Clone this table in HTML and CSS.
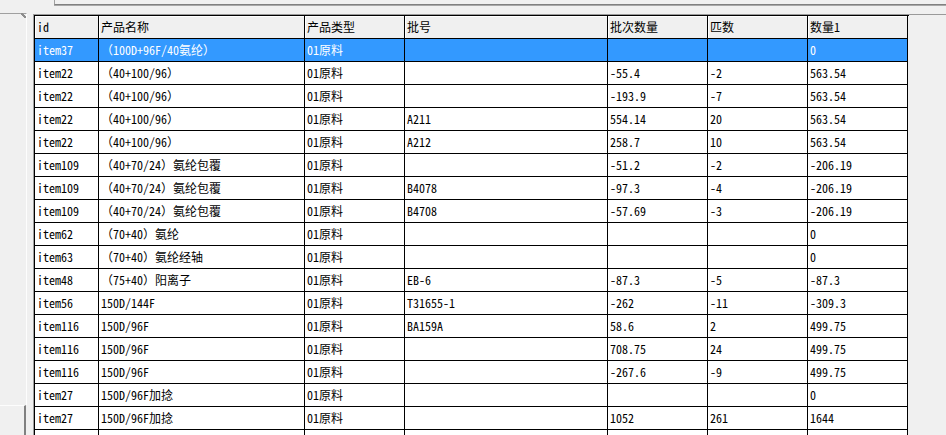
FILE: index.html
```html
<!DOCTYPE html>
<html>
<head>
<meta charset="utf-8">
<link rel="stylesheet" href="styles.css">
</head>
<body>
<div class="top"><div class="topbar"></div></div>
<div class="main">
  <div class="side">
    <div class="side-top">
      <svg class="grip" width="5" height="5" viewBox="0 0 5 5"><path d="M0 0 L5 5 M1 0 L5 4 M0 1 L4 5" stroke="#8c8c8c" stroke-width="1"/></svg>
    </div>
    <div class="side-bottom"></div>
  </div>
  <div class="gridwrap">
    <div class="grid">
      <div class="row head"><div class="c">id</div><div class="c">产品名称</div><div class="c">产品类型</div><div class="c">批号</div><div class="c">批次数量</div><div class="c">匹数</div><div class="c">数量1</div></div>
      <div class="row sel"><div class="c">item37</div><div class="c">（100D+96F/40氨纶）</div><div class="c">01原料</div><div class="c"></div><div class="c"></div><div class="c"></div><div class="c">0</div></div>
      <div class="row"><div class="c">item22</div><div class="c">（40+100/96）</div><div class="c">01原料</div><div class="c"></div><div class="c">-55.4</div><div class="c">-2</div><div class="c">563.54</div></div>
      <div class="row"><div class="c">item22</div><div class="c">（40+100/96）</div><div class="c">01原料</div><div class="c"></div><div class="c">-193.9</div><div class="c">-7</div><div class="c">563.54</div></div>
      <div class="row"><div class="c">item22</div><div class="c">（40+100/96）</div><div class="c">01原料</div><div class="c">A211</div><div class="c">554.14</div><div class="c">20</div><div class="c">563.54</div></div>
      <div class="row"><div class="c">item22</div><div class="c">（40+100/96）</div><div class="c">01原料</div><div class="c">A212</div><div class="c">258.7</div><div class="c">10</div><div class="c">563.54</div></div>
      <div class="row"><div class="c">item109</div><div class="c">（40+70/24）氨纶包覆</div><div class="c">01原料</div><div class="c"></div><div class="c">-51.2</div><div class="c">-2</div><div class="c">-206.19</div></div>
      <div class="row"><div class="c">item109</div><div class="c">（40+70/24）氨纶包覆</div><div class="c">01原料</div><div class="c">B4078</div><div class="c">-97.3</div><div class="c">-4</div><div class="c">-206.19</div></div>
      <div class="row"><div class="c">item109</div><div class="c">（40+70/24）氨纶包覆</div><div class="c">01原料</div><div class="c">B4708</div><div class="c">-57.69</div><div class="c">-3</div><div class="c">-206.19</div></div>
      <div class="row"><div class="c">item62</div><div class="c">（70+40）氨纶</div><div class="c">01原料</div><div class="c"></div><div class="c"></div><div class="c"></div><div class="c">0</div></div>
      <div class="row"><div class="c">item63</div><div class="c">（70+40）氨纶经轴</div><div class="c">01原料</div><div class="c"></div><div class="c"></div><div class="c"></div><div class="c">0</div></div>
      <div class="row"><div class="c">item48</div><div class="c">（75+40）阳离子</div><div class="c">01原料</div><div class="c">EB-6</div><div class="c">-87.3</div><div class="c">-5</div><div class="c">-87.3</div></div>
      <div class="row"><div class="c">item56</div><div class="c">150D/144F</div><div class="c">01原料</div><div class="c">T31655-1</div><div class="c">-262</div><div class="c">-11</div><div class="c">-309.3</div></div>
      <div class="row"><div class="c">item116</div><div class="c">150D/96F</div><div class="c">01原料</div><div class="c">BA159A</div><div class="c">58.6</div><div class="c">2</div><div class="c">499.75</div></div>
      <div class="row"><div class="c">item116</div><div class="c">150D/96F</div><div class="c">01原料</div><div class="c"></div><div class="c">708.75</div><div class="c">24</div><div class="c">499.75</div></div>
      <div class="row"><div class="c">item116</div><div class="c">150D/96F</div><div class="c">01原料</div><div class="c"></div><div class="c">-267.6</div><div class="c">-9</div><div class="c">499.75</div></div>
      <div class="row"><div class="c">item27</div><div class="c">150D/96F加捻</div><div class="c">01原料</div><div class="c"></div><div class="c"></div><div class="c"></div><div class="c">0</div></div>
      <div class="row"><div class="c">item27</div><div class="c">150D/96F加捻</div><div class="c">01原料</div><div class="c"></div><div class="c">1052</div><div class="c">261</div><div class="c">1644</div></div>
      <div class="row"><div class="c"></div><div class="c"></div><div class="c"></div><div class="c"></div><div class="c"></div><div class="c"></div><div class="c"></div></div>
    </div>
  </div>
</div>
</body>
</html>
```

FILE: styles.css
```css
html, body {
  margin: 0;
  padding: 0;
  width: 946px;
  height: 435px;
  overflow: hidden;
  background: #f0f0f0;
  font-family: "Noto Sans Mono CJK SC", "Noto Sans CJK SC", "DejaVu Sans Mono", monospace;
  font-size: 12px;
  color: #000;
}

.top {
  height: 13px;
}

.topbar {
  margin-left: 54px;
  height: 4px;
  border-left: 1px solid #a0a0a0;
  border-bottom: 1px solid #808080;
  box-shadow: 0 1px 0 #a8a8a8;
}

.main {
  display: flex;
  height: 422px;
}

.side {
  width: 27px;
  display: flex;
  flex-direction: column;
}

.side-top {
  position: relative;
  flex: 1;
  border-top: 1px solid #a0a0a0;
  border-right: 1px solid #fdfdfd;
}

.grip {
  position: absolute;
  right: 0;
  top: -1px;
}

.side-bottom {
  height: 29px;
  width: 24px;
  border-top: 1px solid #fdfdfd;
  border-right: 2px solid #808080;
}

.gridwrap {
  flex: 1;
  margin-left: 6px;
  margin-top: 1px;
  border-top: 1px solid #9a9a9a;
  border-left: 1px solid #a0a0a0;
  overflow: hidden;
}

.grid {
  width: 874px;
  border-left: 1px solid #000;
  border-top: 1px solid #000;
}

.row {
  display: grid;
  grid-template-columns: 64px 206px 100px 203px 100px 100px 100px;
  height: 23px;
}

.c {
  box-sizing: border-box;
  height: 23px;
  border-right: 1px solid #000;
  border-bottom: 1px solid #000;
  padding-left: 2px;
  line-height: 22px;
  white-space: nowrap;
  overflow: hidden;
  background: #fff;
}

.head .c {
  background: #f0f0f0;
  box-shadow: inset 1px 1px 0 #fff;
}

.sel .c {
  background: #3399ff;
  color: #fff;
}
```
